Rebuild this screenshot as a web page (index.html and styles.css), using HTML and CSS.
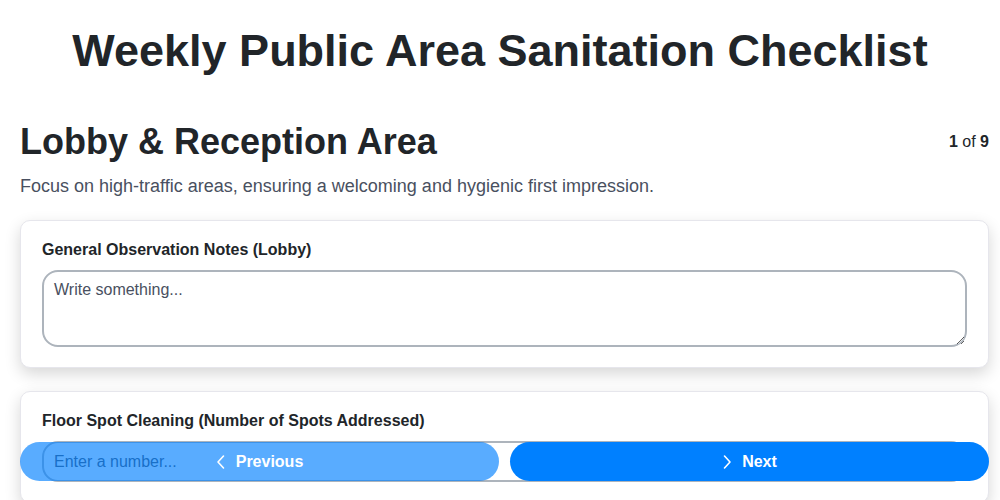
FILE: index.html
```html
<!DOCTYPE html>
<html lang="en">
<head>
<meta charset="utf-8">
<title>Weekly Public Area Sanitation Checklist</title>
<link rel="stylesheet" href="styles.css">
</head>
<body>
<h1 class="page-title">Weekly Public Area Sanitation Checklist</h1>
<main class="section">
  <div class="section-head">
    <h2 class="section-title">Lobby &amp; Reception Area</h2>
    <div class="progress"><b>1</b> of <b>9</b></div>
  </div>
  <p class="section-desc">Focus on high-traffic areas, ensuring a welcoming and hygienic first impression.</p>
  <div class="cards">
    <div class="card">
      <label class="field-label" for="notes">General Observation Notes (Lobby)</label>
      <textarea id="notes" class="textarea" placeholder="Write something..."></textarea>
    </div>
    <div class="card">
      <label class="field-label" for="spots">Floor Spot Cleaning (Number of Spots Addressed)</label>
      <input id="spots" class="input" type="number" placeholder="Enter a number...">
    </div>
  </div>
</main>
<nav class="nav-bar">
  <button class="btn btn-prev" type="button" disabled>
    <svg class="chev" viewBox="0 0 10 16" width="10" height="16"><path d="M7.5 2 L2 8 L7.5 14" fill="none" stroke="#fff" stroke-width="1.6" stroke-linecap="round" stroke-linejoin="round"/></svg>
    Previous
  </button>
  <button class="btn btn-next" type="button">
    <svg class="chev" viewBox="0 0 10 16" width="10" height="16"><path d="M2.5 2 L8 8 L2.5 14" fill="none" stroke="#fff" stroke-width="1.6" stroke-linecap="round" stroke-linejoin="round"/></svg>
    Next
  </button>
</nav>
</body>
</html>
```
FILE: styles.css
```css
* { box-sizing: border-box; }
html, body { margin: 0; padding: 0; background: #fff; }
body {
  font-family: "Liberation Sans", Arial, sans-serif;
  color: #212529;
  padding: 0 11px 0 20px;
}
.page-title {
  margin: 0 -11px 0 -20px;
  padding-top: 24px;
  text-align: center;
  font-size: 45px;
  line-height: 54px;
  font-weight: 700;
  color: #212529;
}
.section { margin-top: 42px; }
.section-head {
  display: flex;
  align-items: center;
  justify-content: space-between;
}
.section-title {
  margin: 0;
  font-size: 36px;
  line-height: 44px;
  font-weight: 700;
}
.progress {
  font-size: 16px;
  color: #212529;
}
.section-desc {
  margin: 10px 0 0;
  font-size: 18px;
  line-height: 24px;
  color: #495060;
}
.cards {
  margin-top: 22px;
  display: flex;
  flex-direction: column;
  gap: 23px;
}
.card {
  background: #fff;
  border: 1px solid #e6e6ec;
  border-radius: 10px;
  box-shadow: 0 6px 16px rgba(0, 0, 0, 0.16);
  padding: 19px 21px 20px;
}
.field-label {
  display: block;
  font-size: 16px;
  line-height: 20px;
  font-weight: 700;
  color: #212529;
  margin-bottom: 10px;
}
.textarea, .input {
  display: block;
  width: 100%;
  border: 2px solid #adb4bc;
  border-radius: 16px;
  font-family: "Liberation Sans", Arial, sans-serif;
  font-size: 16px;
  color: #212529;
  background: #fff;
  padding: 9px 10px;
}
.textarea { height: 77px; resize: vertical; }
.input { height: 41px; }
.textarea::placeholder, .input::placeholder { color: #495060; opacity: 1; }
.nav-bar {
  position: fixed;
  left: 20px;
  right: 11px;
  bottom: 19px;
  display: grid;
  grid-template-columns: 1fr 1fr;
  gap: 11px;
}
.btn {
  height: 39px;
  border: none;
  border-radius: 20px;
  display: flex;
  align-items: center;
  justify-content: center;
  gap: 10px;
  font-family: "Liberation Sans", Arial, sans-serif;
  font-size: 16px;
  font-weight: 700;
  color: #fff;
  background: #0080ff;
}
.btn-prev { opacity: 0.65; }
.chev { display: block; }
```
